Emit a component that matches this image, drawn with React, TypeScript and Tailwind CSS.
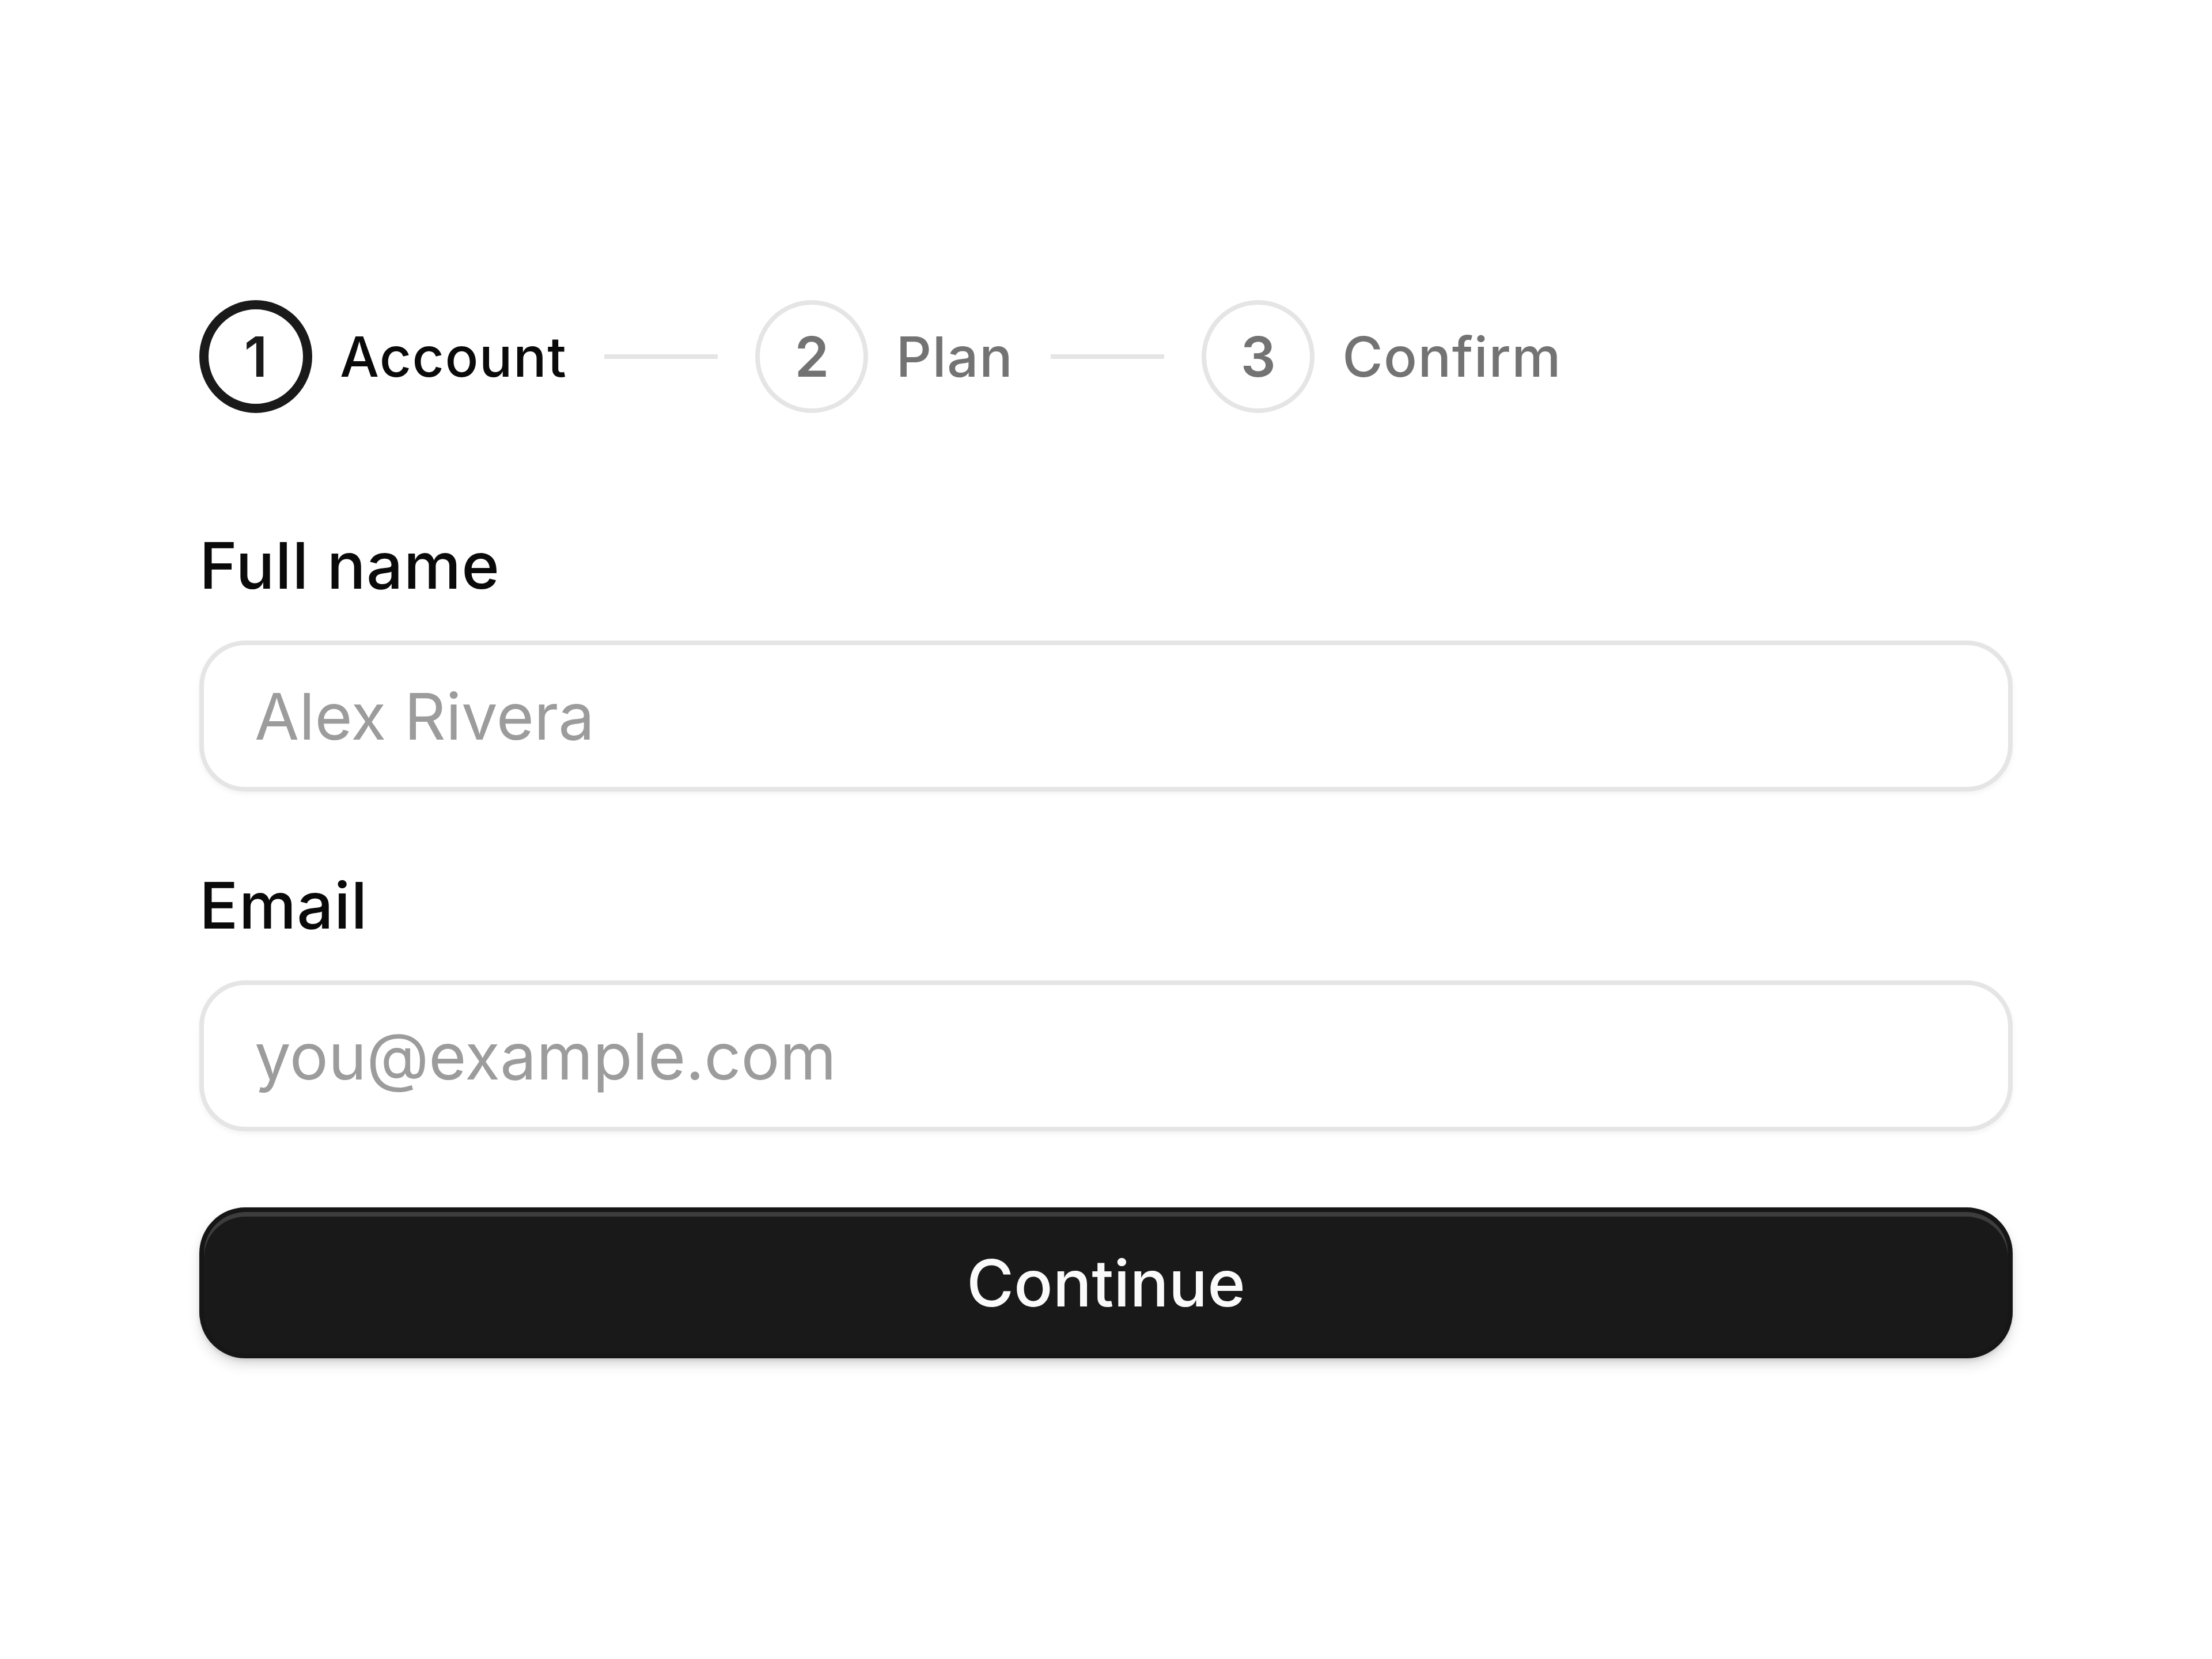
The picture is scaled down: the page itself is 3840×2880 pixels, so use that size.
import React from "react";

type Step = { n: number; label: string; active: boolean };

const steps: Step[] = [
  { n: 1, label: "Account", active: true },
  { n: 2, label: "Plan", active: false },
  { n: 3, label: "Confirm", active: false },
];

function StepItem({ step }: { step: Step }) {
  return (
    <div className="flex items-center gap-[48px]">
      <div
        className={`flex h-[196px] w-[196px] items-center justify-center rounded-full text-[96px] font-semibold ${
          step.active ? "border-[16px] border-[#1a1a1a] text-[#1a1a1a]" : "border-[8px] border-[#e5e5e5] text-[#737373]"
        }`}
      >
        {step.n}
      </div>
      <span
        className={`text-[96px] font-medium leading-none tracking-[0.015em] ${
          step.active ? "text-[#0a0a0a]" : "text-[#737373]"
        }`}
      >
        {step.label}
      </span>
    </div>
  );
}

function Field({ label, placeholder, type }: { label: string; placeholder: string; type: string }) {
  return (
    <div className="flex flex-col gap-[47px]">
      <label className="text-[112px] font-medium leading-[168px] tracking-[0.01em] text-[#0a0a0a]">{label}</label>
      <input
        type={type}
        placeholder={placeholder}
        className="h-[262px] w-full rounded-[80px] border-[8px] border-[#e5e5e5] bg-white px-[88px] text-[112px] text-[#0a0a0a] shadow-[0_4px_10px_rgba(0,0,0,0.05)] outline-none placeholder:text-[#9c9c9c]"
      />
    </div>
  );
}

export default function App() {
  return (
    <div className="min-h-[2880px] w-full bg-white px-[346px] pt-[521px] font-['Inter','Liberation_Sans',sans-serif]">
      <div className="flex items-center gap-[65px]">
        {steps.map((s, i) => (
          <React.Fragment key={s.n}>
            {i > 0 && <div className="h-[8px] w-[197px] bg-[#e5e5e5]" />}
            <StepItem step={s} />
          </React.Fragment>
        ))}
      </div>

      <div className="mt-[180px] flex flex-col gap-[113px]">
        <Field label="Full name" placeholder="Alex Rivera" type="text" />
        <Field label="Email" placeholder="you@example.com" type="email" />
      </div>

      <button className="mt-[132px] flex h-[262px] w-full items-center justify-center rounded-[80px] border-[8px] border-[#161616] bg-[#191919] text-[112px] font-medium text-[#fafafa] shadow-[inset_0_8px_0_rgba(255,255,255,0.16),0_12px_24px_-4px_rgba(0,0,0,0.18),0_4px_8px_-2px_rgba(0,0,0,0.12)]">
        Continue
      </button>
    </div>
  );
}
